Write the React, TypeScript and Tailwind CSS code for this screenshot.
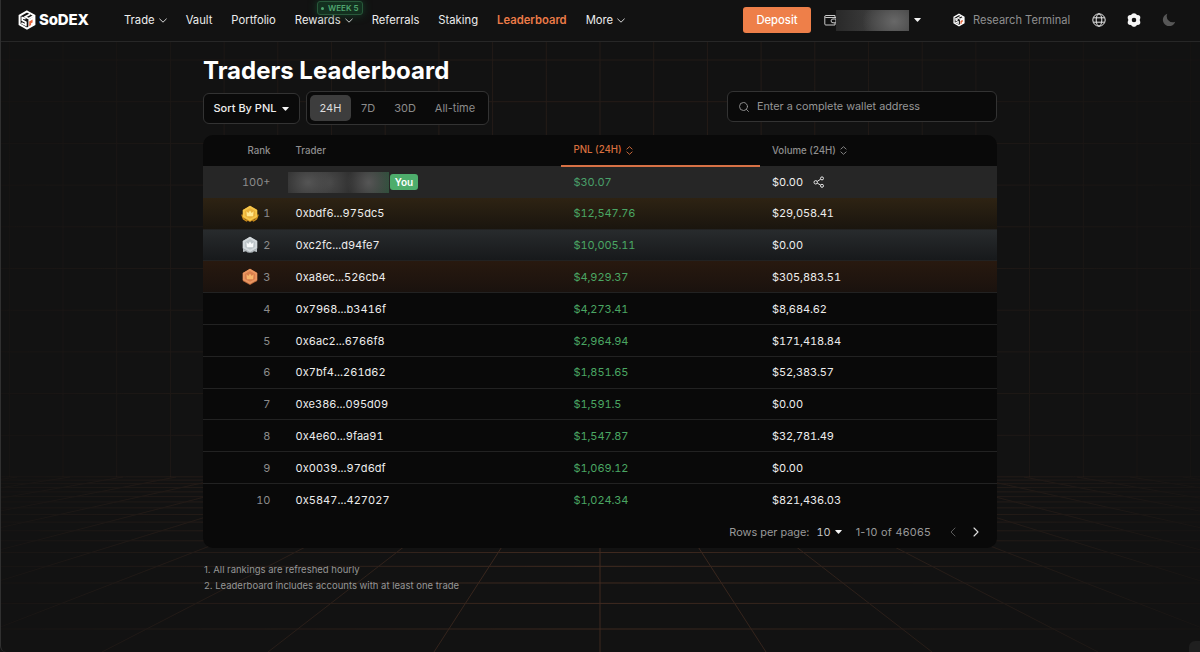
import { ChevronLeft, ChevronRight, Search } from 'lucide-react';

const FONT = "font-['Inter','Liberation_Sans',sans-serif]";

type Trader = {
  rank: number;
  address: string;
  pnl: string;
  volume: string;
};

const traders: Trader[] = [
  { rank: 1, address: '0xbdf6...975dc5', pnl: '$12,547.76', volume: '$29,058.41' },
  { rank: 2, address: '0xc2fc...d94fe7', pnl: '$10,005.11', volume: '$0.00' },
  { rank: 3, address: '0xa8ec...526cb4', pnl: '$4,929.37', volume: '$305,883.51' },
  { rank: 4, address: '0x7968...b3416f', pnl: '$4,273.41', volume: '$8,684.62' },
  { rank: 5, address: '0x6ac2...6766f8', pnl: '$2,964.94', volume: '$171,418.84' },
  { rank: 6, address: '0x7bf4...261d62', pnl: '$1,851.65', volume: '$52,383.57' },
  { rank: 7, address: '0xe386...095d09', pnl: '$1,591.5', volume: '$0.00' },
  { rank: 8, address: '0x4e60...9faa91', pnl: '$1,547.87', volume: '$32,781.49' },
  { rank: 9, address: '0x0039...97d6df', pnl: '$1,069.12', volume: '$0.00' },
  { rank: 10, address: '0x5847...427027', pnl: '$1,024.34', volume: '$821,436.03' },
];

const rowBackground: Record<number, string> = {
  1: 'bg-linear-to-b from-[#2e2313] to-[#1a150e]',
  2: 'bg-linear-to-b from-[#282b2d] to-[#17191b]',
  3: 'bg-linear-to-b from-[#28190f] to-[#1a120e]',
};

const medalColors: Record<number, { rim: string; face: string; inner: string; crown: string }> = {
  1: { rim: '#c98a1c', face: '#f6c64a', inner: '#e9b03a', crown: '#ffe78f' },
  2: { rim: '#a9b0b4', face: '#d3d9dc', inner: '#bcc4c8', crown: '#f7f9fa' },
  3: { rim: '#b8683a', face: '#ea9762', inner: '#d97f4d', crown: '#f8b66c' },
};

function GridBackground() {
  const columns = Array.from({ length: 23 }, (_, i) => i - 11);
  const floorColumns = Array.from({ length: 41 }, (_, i) => i - 20);
  const wallRows = Array.from({ length: 10 }, (_, i) => 60 + i * 41.7);
  // rows get denser toward the horizon
  const floorRows = Array.from({ length: 17 }, (_, i) => 402 + 1 / (0.004405 + i * 0.00056));

  return (
    <svg className="absolute inset-0" width="1200" height="652" viewBox="0 0 1200 652" fill="none">
      <defs>
        <radialGradient id="wallFade" gradientUnits="userSpaceOnUse" cx="600" cy="330" r="620">
          <stop offset="0" stopColor="#fff" stopOpacity="0.14" />
          <stop offset="0.5" stopColor="#fff" stopOpacity="0.08" />
          <stop offset="1" stopColor="#fff" stopOpacity="0.025" />
        </radialGradient>
        <radialGradient id="floorFade" gradientUnits="userSpaceOnUse" cx="600" cy="570" r="600">
          <stop offset="0" stopColor="#fff" stopOpacity="0.24" />
          <stop offset="0.5" stopColor="#fff" stopOpacity="0.12" />
          <stop offset="1" stopColor="#fff" stopOpacity="0.03" />
        </radialGradient>
        <mask id="wallMask">
          <rect width="1200" height="477" fill="url(#wallFade)" />
        </mask>
        <mask id="floorMask">
          <rect y="475" width="1200" height="177" fill="url(#floorFade)" />
        </mask>
      </defs>
      <g stroke="#d97b4e" mask="url(#wallMask)">
        {columns.map((i) => (
          <line key={i} x1={600 + i * 53.7} y1="0" x2={600 + i * 53.7} y2="477" />
        ))}
        {wallRows.map((y) => (
          <line key={y} x1="0" y1={y} x2="1200" y2={y} />
        ))}
      </g>
      <g stroke="#d97b4e" mask="url(#floorMask)">
        {floorColumns.map((i) => (
          <line key={i} x1={600 + i * 53} y1="477" x2={600 + i * 166} y2="652" />
        ))}
        {floorRows.map((y) => (
          <line key={y} x1="0" y1={y} x2="1200" y2={y} />
        ))}
      </g>
    </svg>
  );
}

function LogoMark({ className }: { className: string }) {
  return (
    <svg className={className} viewBox="0 0 18 20" fill="none">
      <path d="M9 1.5 16.4 5.7v8.6L9 18.5 1.6 14.3V5.7z" stroke="#fff" strokeWidth="2" />
      <path d="M12 4.2 7.2 6.8l3.3 1.9 5.2-2.9" stroke="#fff" strokeWidth="1.6" />
      <path d="M7.6 8.6 4.3 7.7v2.6l3.5 2v2.8L3.4 13" stroke="#fff" strokeWidth="1.8" />
      <path d="M10.4 9.4 16.4 6v8.3L10.4 18z" fill="#fff" />
      <path d="M11.2 11.5 14.6 9.6v2.9l-1.5.8v1.8l-1.9 1.1z" fill="#e8663c" />
    </svg>
  );
}

function Caret() {
  return (
    <svg className="h-1 w-[7px] shrink-0" viewBox="0 0 7 4">
      <path d="M0.5 0h6q.6 0 .2.5L4 3.6q-.5.5-1 0L.3.5Q0 0 .5 0z" fill="#f5f5f5" />
    </svg>
  );
}

function SortIcon() {
  return (
    <svg className="h-[9px] w-[7px] shrink-0" viewBox="0 0 7 9" fill="none" stroke="currentColor" strokeWidth="0.9">
      <path d="M.6 3.3 3.5.7l2.9 2.6M.6 5.7l2.9 2.6 2.9-2.6" />
    </svg>
  );
}

function ShareIcon() {
  return (
    <svg className="size-3" viewBox="0 0 12 12" fill="none" stroke="#e5e5e5" strokeWidth="1">
      <circle cx="2.7" cy="6.3" r="1.7" />
      <circle cx="9" cy="2.4" r="1.5" />
      <circle cx="9" cy="9.8" r="1.5" />
      <path d="M4.2 5.4 7.7 3.2M4.2 7.1l3.5 2" />
    </svg>
  );
}

function Medal({ rank }: { rank: number }) {
  const c = medalColors[rank];
  return (
    <svg className="size-[18px]" viewBox="0 0 18 18">
      {rank === 1 && <path d="M0.8 9.5 2.5 14l3 2 1-.8M17.2 9.5 15.5 14l-3 2-1-.8" stroke="#c98a1c" strokeWidth="1.4" fill="none" />}
      {rank === 2 && <path d="M2 12v4l3-.8 2 1.6 2-1 2 1 2-1.6 3 .8v-4z" fill="#b9c0c4" />}
      <path d="M9 0.8 16.2 4.9v8L9 17 1.8 12.9v-8z" fill={c.rim} />
      <path d="M9 0.8 16.2 4.9v7L9 15.9 1.8 11.9v-7z" fill={c.face} />
      <path d="M9 3 14.2 6v5L9 13.8 3.8 11V6z" fill={c.inner} />
      <path d="M5.4 6.3 7.3 8 9 5.6 10.7 8l1.9-1.7-.5 4.9H5.9z" fill={c.crown} />
    </svg>
  );
}

function NavItem({ label, chevron, active }: { label: string; chevron?: boolean; active?: boolean }) {
  return (
    <a className={active ? 'flex items-center font-semibold text-[#ec7b48]' : 'flex items-center gap-1 text-[#ededed]'}>
      {label}
      {chevron && (
        <svg className="h-[5px] w-2" viewBox="0 0 8 5" fill="none" stroke="currentColor" strokeWidth="0.9">
          <path d="M.4.7 4 4.2 7.6.7" />
        </svg>
      )}
    </a>
  );
}

function Header() {
  return (
    <header className="relative flex h-[42px] items-center border-b border-[#272727] bg-[#121212] pb-px pl-[18px] text-[11.25px] leading-4">
      <div className="flex w-[106px] items-center gap-[3px]">
        <LogoMark className="h-5 w-[18px]" />
        <span className="text-[15px] font-extrabold tracking-[-0.2px] text-white">SoDEX</span>
      </div>
      <nav className="flex items-center gap-[19px]">
        <NavItem label="Trade" chevron />
        <NavItem label="Vault" />
        <NavItem label="Portfolio" />
        <div className="relative">
          <NavItem label="Rewards" chevron />
          <span className="absolute -top-[11px] left-[22px] flex h-[14px] w-[46px] items-center justify-center gap-1 rounded-[3px] border border-[#28583a] bg-[#13301f] text-[8px] leading-3 font-semibold whitespace-nowrap text-[#4fa66f] shadow-[0_0_8px_#17402a]">
            <span className="size-[3px] rounded-full bg-[#4fa66f]" />
            WEEK 5
          </span>
        </div>
        <NavItem label="Referrals" />
        <NavItem label="Staking" />
        <NavItem label="Leaderboard" active />
        <NavItem label="More" chevron />
      </nav>
      <div className="ml-auto flex items-center pr-6">
        <button className="mr-[13px] h-[26px] w-[68px] rounded-[3px] bg-[#ee7f49] font-medium text-white">Deposit</button>
        <svg className="h-3 w-3 shrink-0" viewBox="0 0 12 12" fill="none" stroke="#c8c8c8" strokeWidth="1">
          <path d="M11 3.5V1.5H1.8a1 1 0 0 0 0 2H12M.8 2.5V10q0 1 1 1H11V9M12 5H9a1.8 1.8 0 0 0 0 3.8h3z" />
        </svg>
        <div className="h-[21px] w-[73px] bg-[radial-gradient(32px_26px_at_80%_55%,#686868_0%,#68686800_100%),linear-gradient(90deg,#292929,#3c3c3c_50%,#3c3c3c)]" />
        <div className="ml-[5px] flex">
          <Caret />
        </div>
        <LogoMark className="ml-8 h-[14px] w-3" />
        <span className="ml-2 w-[97px] text-[11.1px] whitespace-nowrap text-[#8f8f8f]">Research Terminal</span>
        <svg className="ml-[22px] size-[14px]" viewBox="0 0 14 14" fill="none" stroke="#e8e8e8" strokeWidth="1">
          <circle cx="7" cy="7" r="6.2" />
          <ellipse cx="7" cy="7" rx="2.8" ry="6.2" />
          <path d="M1.4 4.8h11.2M1.4 9.2h11.2" />
        </svg>
        <svg className="ml-[21px] size-[14px]" viewBox="0 0 14 14">
          <path
            fillRule="evenodd"
            fill="#f5f5f5"
            d="M5.2.8Q7-.4 8.8.8L10 2q2.6 0 3 1.2.8 1.4-.4 3.8 1.2 2.4.4 3.8-.4 1.2-3 1.2l-1.2 1.2Q7 14.4 5.2 13.2L4 12q-2.6 0-3-1.2Q.2 9.4 1.4 7 .2 4.6 1 3.2 1.4 2 4 2zM7 4.7a2.3 2.3 0 1 0 0 4.6 2.3 2.3 0 0 0 0-4.6z"
          />
        </svg>
        <svg className="ml-[21px] size-[14px]" viewBox="0 0 14 14">
          <path d="M5.3.8A6.3 6.3 0 1 0 13.2 8.7 6 6 0 0 1 5.3.8z" fill="#575757" />
        </svg>
      </div>
    </header>
  );
}

function Toolbar() {
  return (
    <div className="mt-1.5 flex h-[34px] items-center text-[11px]">
      <button className="flex h-[31px] w-[97px] items-center justify-center gap-1.5 rounded-md border border-[#333] bg-[#0a0a0a] pt-px font-medium text-[#ededed]">
        Sort By PNL
        <Caret />
      </button>
      <div className="ml-1.5 flex h-[34px] w-[183px] items-center rounded-md border border-[#333] bg-[#0a0a0a] pl-[3px] text-[#8c8c8c]">
        <button className="h-[26px] w-[41px] rounded-[5px] bg-[#3d3d3d] pt-px text-[#dedede]">24H</button>
        <button className="w-[34px] pt-px">7D</button>
        <button className="w-10 pt-px">30D</button>
        <button className="w-[60px] pt-px">All-time</button>
      </div>
      <div className="mb-[3px] ml-auto flex h-[31px] w-[270px] items-center gap-[7px] rounded-md border border-[#333] bg-[#0a0a0a] pl-2.5 text-[10.8px] text-[#969696]">
        <Search size={12} strokeWidth={1.8} />
        <span className="pt-px">Enter a complete wallet address</span>
      </div>
    </div>
  );
}

const COLUMNS = 'grid grid-cols-[67.5px_290px_199px_237.5px] items-center';

function LeaderboardTable() {
  return (
    <div className="mt-2.5 h-[413px] overflow-hidden rounded-[10px] bg-[#090909] text-[11px]">
      <div className={`${COLUMNS} h-[31px] text-[9.7px] font-medium text-[#8f8f8f]`}>
        <span className="text-right">Rank</span>
        <span className="pl-[25px]">Trader</span>
        <span className="flex h-8 items-center gap-1 border-b-2 border-[#d77145] pt-px pl-[13px] text-[#d9703f]">
          PNL (24H)
          <SortIcon />
        </span>
        <span className="flex items-center gap-1 pl-[12.5px]">
          Volume (24H)
          <SortIcon />
        </span>
      </div>
      <div className={`${COLUMNS} h-[31.8px] bg-[#262626] pt-px tabular-nums`}>
        <span className="text-right text-[#8c8c8c]">100+</span>
        <span className="flex items-center gap-px pl-[17.5px]">
          <span className="h-[21px] w-[101px] bg-[radial-gradient(26px_24px_at_20%_50%,#555,#55555500),radial-gradient(22px_24px_at_42%_50%,#484848,#48484800),radial-gradient(22px_24px_at_80%_50%,#565656,#56565600),linear-gradient(90deg,#303030,#303030_75%,#31513d)]" />
          <span className="flex h-4 w-7 items-center justify-center rounded-[3px] bg-[#4ead6c] text-[10px] font-semibold text-white">You</span>
        </span>
        <span className="pl-[13px] tracking-[-0.1px] text-[#4aa06a]">$30.07</span>
        <span className="flex items-center gap-2.5 pl-[12.5px] tracking-[-0.1px] text-[#ededed]">
          $0.00
          <ShareIcon />
        </span>
      </div>
      {traders.map((t) => (
        <div
          key={t.rank}
          className={`${COLUMNS} h-[31.8px] pt-px tabular-nums ${t.rank < 10 ? 'border-b border-[#222]' : ''} ${rowBackground[t.rank] ?? ''}`}
        >
          <span className="flex items-center justify-end gap-1 text-[#8c8c8c]">
            {t.rank <= 3 && <Medal rank={t.rank} />}
            {t.rank}
          </span>
          <span className="pl-[25px] tracking-[0.05px] text-[#ededed]">{t.address}</span>
          <span className="pl-[13px] tracking-[-0.1px] text-[#4aa663]">{t.pnl}</span>
          <span className="pl-[12.5px] tracking-[-0.1px] text-[#ededed]">{t.volume}</span>
        </div>
      ))}
      <div className="flex h-8 items-center justify-end pr-[13px] text-[10.9px] text-[#999]">
        <span>Rows per page:</span>
        <span className="mr-1 ml-[7px] text-[#c4c4c4] tabular-nums">10</span>
        <Caret />
        <span className="ml-3.5 tracking-[0.3px]">1-10 of 46065</span>
        <ChevronLeft className="ml-3.5 text-[#666]" size={16} strokeWidth={1.3} />
        <ChevronRight className="ml-[7px] text-[#ddd]" size={16} strokeWidth={1.7} />
      </div>
    </div>
  );
}

export default function App() {
  return (
    <div className={`relative h-[652px] w-[1200px] overflow-hidden bg-[#121212] ${FONT}`}>
      <GridBackground />
      <Header />
      <main className="relative mx-auto w-[794px] pt-[15px]">
        <h1 className="text-[24px] leading-7 font-bold text-white">Traders Leaderboard</h1>
        <Toolbar />
        <LeaderboardTable />
        <div className="mt-3.5 pl-px text-[9.5px] leading-4 text-[#969696]">
          <p>1. All rankings are refreshed hourly</p>
          <p>2. Leaderboard includes accounts with at least one trade</p>
        </div>
      </main>
      <div className="pointer-events-none absolute inset-0 rounded-bl-[6px] border-l border-[#303030]" />
      <div className="absolute right-0 bottom-0 h-[11px] w-[11px] rounded-tl-[6px] bg-[#1f1f1f]" />
    </div>
  );
}
